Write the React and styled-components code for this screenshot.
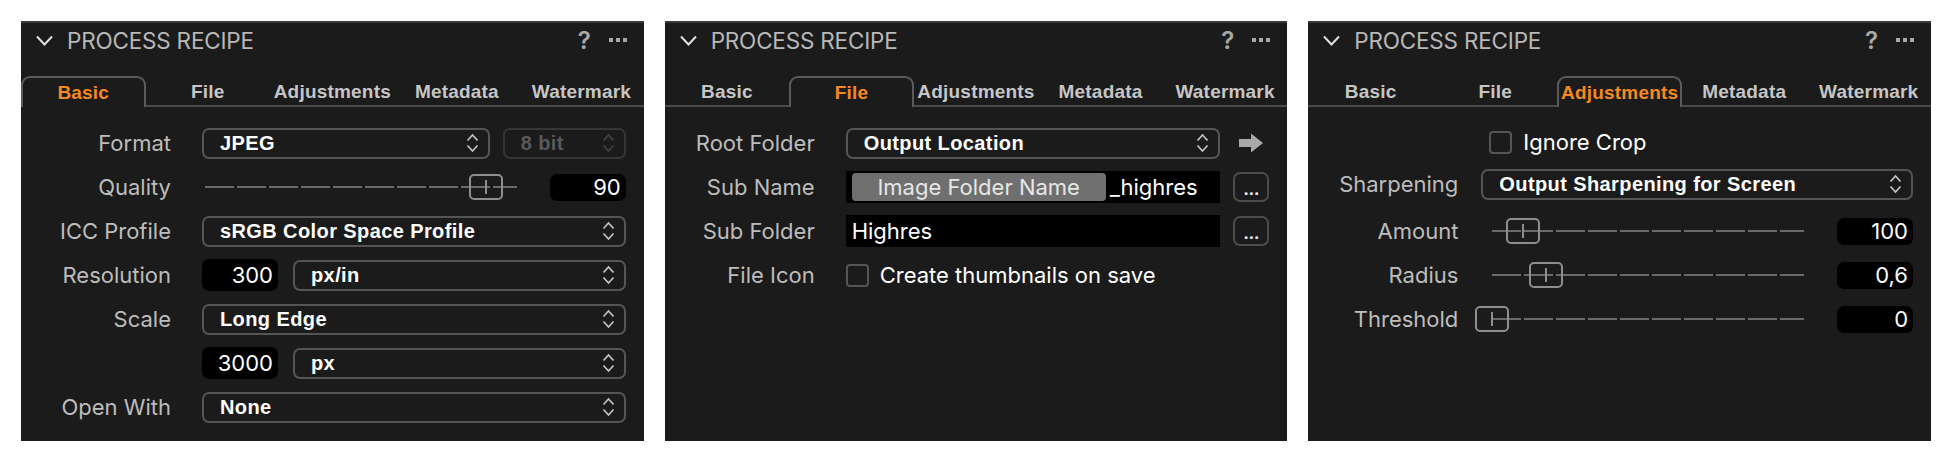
import React from 'react';
import styled, { createGlobalStyle, css } from 'styled-components';

const GlobalStyle = createGlobalStyle`
  body {
    margin: 0;
    background: #ffffff;
  }
`;

const Page = styled.div`
  box-sizing: border-box;
  width: 1952px;
  display: flex;
  gap: 21px;
  padding: 21px;
  font-family: Inter, "Liberation Sans", sans-serif;
`;

const Panel = styled.section`
  flex: 1;
  height: 420px;
  box-sizing: border-box;
  background: #1b1b1b;
  border-top: 2px solid #3a3a3a;
  display: flex;
  flex-direction: column;
`;

/* header */
const Header = styled.header`
  height: 34px;
  display: flex;
  align-items: center;
  gap: 14px;
  padding: 0 17px 0 15px;
`;

const Title = styled.h2`
  flex: 1;
  margin: 0;
  font-size: 22.5px;
  font-weight: 400;
  color: #b8b8b8;
  letter-spacing: -0.2px;
`;

const Help = styled.span`
  font-size: 24px;
  font-weight: 600;
  color: #a8a8a8;
  margin-right: 4px;
`;

const More = styled.span`
  display: flex;
  gap: 3px;
  span {
    width: 4px;
    height: 4px;
    background: #a8a8a8;
  }
`;

/* tabs */
const Tabs = styled.nav`
  display: grid;
  grid-template-columns: repeat(5, 1fr);
  margin-top: 19px;
  height: 31px;
`;

const Tab = styled.div`
  box-sizing: border-box;
  display: flex;
  align-items: center;
  justify-content: center;
  font-family: "Liberation Sans", Arial, sans-serif;
  font-size: 19px;
  font-weight: 700;
  letter-spacing: 0.2px;
  color: #c6c6c6;
  box-shadow: inset 0 -2px 0 #4a4a4a;
  ${({ $active }) =>
    $active &&
    css`
      color: #f5891f;
      box-shadow: none;
      border: 2px solid #5a5a5a;
      border-bottom: 0;
      border-radius: 9px 9px 0 0;
    `}
`;

/* body */
const Body = styled.div`
  display: flex;
  flex-direction: column;
  padding: 14px 18px 0 0;
`;

const Row = styled.div`
  display: grid;
  grid-template-columns: 150px 1fr;
  column-gap: ${({ $gap }) => $gap || 31}px;
  align-items: center;
  height: ${({ $h }) => $h || 44}px;
  margin-top: ${({ $mt }) => $mt || 0}px;
`;

const Label = styled.label`
  text-align: right;
  font-size: 22px;
  color: #bdbdbd;
  white-space: nowrap;
`;

const Controls = styled.div`
  display: flex;
  align-items: center;
  gap: ${({ $gap }) => $gap || 13}px;
  min-width: 0;
`;

const SelectBox = styled.div`
  box-sizing: border-box;
  flex: ${({ $w }) => ($w ? `0 0 ${$w}px` : 1)};
  height: 31px;
  display: flex;
  align-items: center;
  justify-content: space-between;
  padding: 0 9px 0 16px;
  border: 2px solid ${({ $disabled }) => ($disabled ? '#363636' : '#555555')};
  border-radius: 7px;
  font-family: "Liberation Sans", Arial, sans-serif;
  font-size: 20px;
  font-weight: 700;
  letter-spacing: 0.4px;
  color: ${({ $disabled }) => ($disabled ? '#595959' : '#ffffff')};
  white-space: nowrap;
  svg {
    flex: none;
    stroke: ${({ $disabled }) => ($disabled ? '#444444' : '#c4c4c4')};
  }
`;

const ValueBox = styled.div`
  box-sizing: border-box;
  flex: 0 0 76px;
  height: ${({ $h }) => $h || 27}px;
  line-height: ${({ $h }) => $h || 27}px;
  padding-right: 5px;
  text-align: right;
  background: #000000;
  border-radius: 7px;
  font-size: 22px;
  color: #ffffff;
`;

const SliderBox = styled.div`
  position: relative;
  flex: 1;
  height: 26px;
`;

const Track = styled.div`
  position: absolute;
  left: 3px;
  right: 0;
  top: 12px;
  height: 2px;
  background: repeating-linear-gradient(
    to right,
    #6a6a6a 0 29px,
    transparent 29px 32px
  );
`;

const Thumb = styled.div`
  position: absolute;
  top: 0;
  box-sizing: border-box;
  width: 34px;
  height: 26px;
  margin-left: -17px;
  border: 2px solid #8e8e8e;
  border-radius: 5px;
  &::after {
    content: "";
    position: absolute;
    left: 14px;
    top: 4px;
    width: 2px;
    height: 14px;
    background: #8e8e8e;
  }
`;

const BlackField = styled.div`
  box-sizing: border-box;
  flex: 1;
  height: 32px;
  display: flex;
  align-items: center;
  gap: 4px;
  padding: 0 6px;
  background: #000000;
  font-size: 22px;
  color: #ffffff;
  white-space: nowrap;
  overflow: hidden;
`;

const Token = styled.span`
  flex: 0 0 254px;
  height: 28px;
  display: flex;
  align-items: center;
  justify-content: center;
  background: #6f6f6f;
  border-radius: 4px;
  color: #e6e6e6;
`;

const DotsButton = styled.div`
  box-sizing: border-box;
  flex: 0 0 36px;
  height: 30px;
  display: flex;
  align-items: center;
  justify-content: center;
  padding-top: 4px;
  border: 2px solid #4c4c4c;
  border-radius: 7px;
  color: #ffffff;
  font-size: 15px;
  font-weight: 800;
`;

const IconSlot = styled.div`
  flex: 0 0 36px;
  display: flex;
  justify-content: center;
`;

const Check = styled.div`
  display: flex;
  align-items: center;
  gap: 11px;
  font-size: 22px;
  color: #ffffff;
  white-space: nowrap;
  &::before {
    content: "";
    box-sizing: border-box;
    width: 23px;
    height: 23px;
    border: 2px solid #555555;
    border-radius: 4px;
  }
`;

/* drawings */
const Chevron = () => (
  <svg width="17" height="11" viewBox="0 0 17 11" fill="none">
    <polyline points="1,1.5 8.5,9.5 16,1.5" stroke="#e0e0e0" strokeWidth="2" />
  </svg>
);

const UpDown = () => (
  <svg width="13" height="22" viewBox="0 0 13 22" fill="none" strokeWidth="1.7">
    <polyline points="1.5,8.5 6.5,3 11.5,8.5" />
    <polyline points="1.5,13.5 6.5,19 11.5,13.5" />
  </svg>
);

const BlockArrow = () => (
  <svg width="24" height="20" viewBox="0 0 24 20">
    <polygon points="0,6 12,6 12,0.5 24,10 12,19.5 12,14 0,14" fill="#a9a9a9" />
  </svg>
);

const Select = ({ children, w, disabled }) => (
  <SelectBox $w={w} $disabled={disabled}>
    <span>{children}</span>
    <UpDown />
  </SelectBox>
);

const Slider = ({ frac }) => (
  <SliderBox>
    <Track />
    <Thumb style={{ left: `calc(3px + (100% - 3px) * ${frac})` }} />
  </SliderBox>
);

const TABS = ['Basic', 'File', 'Adjustments', 'Metadata', 'Watermark'];

const Recipe = ({ active, children }) => (
  <Panel>
    <Header>
      <Chevron />
      <Title>PROCESS RECIPE</Title>
      <Help>?</Help>
      <More>
        <span />
        <span />
        <span />
      </More>
    </Header>
    <Tabs>
      {TABS.map((t) => (
        <Tab key={t} $active={t === active}>
          {t}
        </Tab>
      ))}
    </Tabs>
    <Body>{children}</Body>
  </Panel>
);

const App = () => (
  <>
    <GlobalStyle />
    <Page>
      <Recipe active="Basic">
        <Row>
          <Label>Format</Label>
          <Controls>
            <Select>JPEG</Select>
            <Select w={123} disabled>
              8 bit
            </Select>
          </Controls>
        </Row>
        <Row>
          <Label>Quality</Label>
          <Controls $gap={33}>
            <Slider frac={0.9} />
            <ValueBox>90</ValueBox>
          </Controls>
        </Row>
        <Row>
          <Label>ICC Profile</Label>
          <Controls>
            <Select>sRGB Color Space Profile</Select>
          </Controls>
        </Row>
        <Row>
          <Label>Resolution</Label>
          <Controls $gap={15}>
            <ValueBox $h={32}>300</ValueBox>
            <Select>px/in</Select>
          </Controls>
        </Row>
        <Row>
          <Label>Scale</Label>
          <Controls>
            <Select>Long Edge</Select>
          </Controls>
        </Row>
        <Row>
          <Label />
          <Controls $gap={15}>
            <ValueBox $h={32}>3000</ValueBox>
            <Select>px</Select>
          </Controls>
        </Row>
        <Row>
          <Label>Open With</Label>
          <Controls>
            <Select>None</Select>
          </Controls>
        </Row>
      </Recipe>

      <Recipe active="File">
        <Row>
          <Label>Root Folder</Label>
          <Controls>
            <Select>Output Location</Select>
            <IconSlot>
              <BlockArrow />
            </IconSlot>
          </Controls>
        </Row>
        <Row>
          <Label>Sub Name</Label>
          <Controls>
            <BlackField>
              <Token>Image Folder Name</Token>
              <span>_highres</span>
            </BlackField>
            <DotsButton>...</DotsButton>
          </Controls>
        </Row>
        <Row>
          <Label>Sub Folder</Label>
          <Controls>
            <BlackField>Highres</BlackField>
            <DotsButton>...</DotsButton>
          </Controls>
        </Row>
        <Row>
          <Label>File Icon</Label>
          <Controls>
            <Check>Create thumbnails on save</Check>
          </Controls>
        </Row>
      </Recipe>

      <Recipe active="Adjustments">
        <Row $h={42}>
          <Label />
          <Controls>
            <Check>Ignore Crop</Check>
          </Controls>
        </Row>
        <Row $h={42} $gap={23}>
          <Label>Sharpening</Label>
          <Controls>
            <Select>Output Sharpening for Screen</Select>
          </Controls>
        </Row>
        <Row $mt={4}>
          <Label>Amount</Label>
          <Controls $gap={33}>
            <Slider frac={0.097} />
            <ValueBox>100</ValueBox>
          </Controls>
        </Row>
        <Row>
          <Label>Radius</Label>
          <Controls $gap={33}>
            <Slider frac={0.173} />
            <ValueBox>0,6</ValueBox>
          </Controls>
        </Row>
        <Row>
          <Label>Threshold</Label>
          <Controls $gap={33}>
            <Slider frac={0} />
            <ValueBox>0</ValueBox>
          </Controls>
        </Row>
      </Recipe>
    </Page>
  </>
);

export default App;
